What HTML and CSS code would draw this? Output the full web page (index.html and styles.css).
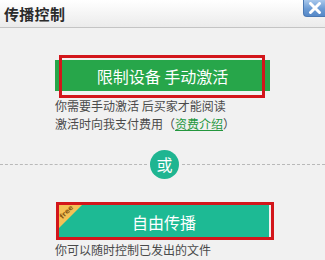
FILE: index.html
```html
<!DOCTYPE html>
<html lang="zh-CN">
<head>
<meta charset="utf-8">
<title>传播控制</title>
<link rel="stylesheet" href="styles.css">
</head>
<body>
<div class="dialog">
  <header class="titlebar">
    <h1 class="title">传播控制</h1>
    <button class="close" aria-label="关闭">
      <svg width="14" height="12" viewBox="0 0 14 12"><path d="M2.5 1.5 L11.5 10.5 M11.5 1.5 L2.5 10.5" stroke="#fff" stroke-width="3" stroke-linecap="round"/></svg>
    </button>
  </header>
  <main class="content">
    <div class="option option-limit">
      <div class="btn btn-green">限制设备 手动激活</div>
      <span class="mark mark-1"></span>
    </div>
    <p class="desc desc-1">你需要手动激活 后买家才能阅读<br>激活时向我支付费用（<a href="#" class="link">资费介绍</a>）</p>
    <div class="divider">
      <span class="line line-left"></span>
      <span class="or">或</span>
      <span class="line line-right"></span>
    </div>
    <div class="option option-free">
      <div class="btn btn-teal">
        <span class="ribbon"><span class="ribbon-text">free</span></span>
        自由传播
      </div>
      <span class="mark mark-2"></span>
    </div>
    <p class="desc desc-2">你可以随时控制已发出的文件</p>
  </main>
</div>
</body>
</html>
```
FILE: styles.css
```css
html, body {
  margin: 0;
  padding: 0;
}
body {
  width: 325px;
  height: 260px;
  overflow: hidden;
  background: #f1f1f1;
  font-family: "Microsoft YaHei", "Noto Sans CJK SC", "Noto Sans", sans-serif;
  color: #444;
}
.dialog {
  position: relative;
}
.titlebar {
  position: relative;
  height: 27px;
  border-bottom: 1px solid #c4c4c4;
  background: linear-gradient(#ffffff, #f3f3f3 60%, #ebebeb);
}
.title {
  margin: 0;
  padding-left: 4px;
  font-size: 15px;
  line-height: 27px;
  font-weight: bold;
  letter-spacing: 0.3px;
  color: #2b2b2b;
}
.close {
  position: absolute;
  top: 0;
  right: 0;
  width: 22px;
  height: 17px;
  padding: 0;
  border: 1px solid #4a78b3;
  border-top: none;
  border-right: none;
  border-radius: 0 0 0 4px;
  background: linear-gradient(#a9c8ec, #6b9bd4 55%, #5689c8);
  display: flex;
  align-items: center;
  justify-content: center;
}
.content {
  padding-top: 32px;
}
.option {
  position: relative;
}
.btn {
  color: #fff;
  font-size: 16px;
  text-align: center;
  box-sizing: border-box;
}
.btn-green {
  margin-left: 55px;
  width: 215px;
  height: 31px;
  line-height: 33px;
  background: #27a64a;
}
.btn-teal {
  position: relative;
  margin-left: 59px;
  width: 210px;
  height: 32px;
  line-height: 35px;
  background: #1dba94;
}
.mark {
  position: absolute;
  border: 3px solid #d3161b;
  box-sizing: border-box;
  pointer-events: none;
}
.mark-1 {
  left: 59px;
  width: 206px;
  top: -5px;
  height: 43px;
}
.mark-2 {
  left: 56px;
  width: 218px;
  top: -3px;
  height: 38px;
}
.desc {
  margin: 0;
  padding-left: 55px;
  font-size: 12px;
  line-height: 18px;
  color: #4a4a4a;
}
.desc-1 {
  margin-top: 6px;
}
.desc-2 {
  margin-top: 4px;
}
.link {
  color: #23963d;
  text-decoration: underline;
}
.divider {
  display: flex;
  align-items: center;
  margin-top: 17px;
  height: 29px;
}
.line {
  height: 0;
  border-top: 1px dashed #b9b9b9;
}
.line-left {
  width: 147px;
  margin-right: 3px;
}
.line-right {
  flex: 1;
  margin-left: 3px;
}
.or {
  width: 29px;
  height: 29px;
  border-radius: 50%;
  background: #1fb591;
  color: #fff;
  font-size: 16px;
  line-height: 29px;
  text-align: center;
}
.option-free {
  margin-top: 26px;
}
.ribbon {
  position: absolute;
  left: 0;
  top: 0;
  width: 23px;
  height: 23px;
  display: block;
}
.ribbon::before {
  content: "";
  position: absolute;
  inset: 0;
  background: #f4c155;
  clip-path: polygon(0 0, 100% 0, 0 100%);
}
.ribbon-text {
  display: block;
  position: absolute;
  left: 0;
  top: 4px;
  width: 16px;
  text-align: center;
  font-family: "DejaVu Sans", sans-serif;
  font-size: 7px;
  line-height: 7px;
  font-weight: bold;
  color: #8a5a14;
  transform: rotate(-45deg);
  transform-origin: 50% 50%;
}
```
